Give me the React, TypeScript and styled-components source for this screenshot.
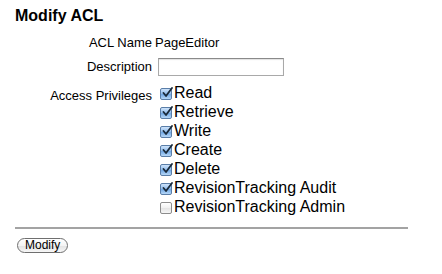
import React from 'react';
import styled, {createGlobalStyle} from 'styled-components';

const GlobalStyle = createGlobalStyle`
    html, body {
        margin: 0;
        padding: 0;
        background: #ffffff;
    }
    body {
        font-family: "Liberation Sans", Arial, sans-serif;
        color: #000000;
    }
`;

const Page = styled.div`
    width: 393px;
    padding: 6px 0 0 15px;
`;

const Title = styled.h2`
    font-size: 16px;
    font-weight: bold;
    line-height: 19px;
    margin: 0 0 10px 0;
`;

const FormGrid = styled.div`
    display: grid;
    grid-template-columns: 137px 1fr;
    column-gap: 3px;
    row-gap: 7px;
    align-items: baseline;
`;

const Label = styled.div`
    font-size: 13px;
    line-height: 16px;
    text-align: right;
`;

const Value = styled.div`
    font-size: 13px;
    line-height: 16px;
`;

const TextInput = styled.input`
    box-sizing: border-box;
    width: 126px;
    height: 18px;
    margin: 0 0 0 3px;
    padding: 1px 3px;
    border: 1px solid #a9a9a9;
    border-top-color: #8a8a8a;
    box-shadow: inset 0 1px 1px rgba(0, 0, 0, 0.12);
    font-family: inherit;
    font-size: 12px;
    vertical-align: baseline;
`;

const PrivilegeList = styled.div`
    display: flex;
    flex-direction: column;
`;

const PrivilegeRow = styled.label`
    display: flex;
    align-items: center;
    font-size: 16px;
    line-height: 19px;
    height: 19px;
`;

const Box = styled.span<{ $checked: boolean }>`
    box-sizing: border-box;
    display: inline-flex;
    align-items: center;
    justify-content: center;
    width: 12px;
    height: 12px;
    margin: 2px 2px 0 5px;
    border-radius: 2px;
    border: 1px solid ${(p) => (p.$checked ? '#5a7ea8' : '#8c8c8c')};
    background: ${(p) =>
        p.$checked
            ? 'linear-gradient(#cfe4fb 0%, #8fbbeb 50%, #6ea6e4 51%, #b6d7f7 100%)'
            : 'linear-gradient(#ffffff 0%, #f0f0f0 50%, #e3e3e3 51%, #f6f6f6 100%)'};
    position: relative;
    svg {
        position: absolute;
        left: 1px;
        top: -2px;
    }
`;

const Divider = styled.hr`
    border: none;
    border-top: 2px solid #a3a3a3;
    margin: 11px 0 0 0;
    height: 0;
`;

const Button = styled.button`
    margin: 9px 0 0 2px;
    height: 15px;
    padding: 0 7px;
    border: 1px solid #6f6f6f;
    border-radius: 8px;
    background: linear-gradient(#ffffff 0%, #f4f4f4 50%, #e2e2e2 51%, #f7f7f7 100%);
    font-family: "Liberation Sans", Arial, sans-serif;
    font-size: 12px;
    line-height: 13px;
    color: #000000;
`;

const Check = () => (
    <svg width="11" height="11" viewBox="0 0 11 11">
        <path d="M1.5 6 L4 9 L10 1" fill="none" stroke="#1a2a3a" strokeWidth="1.8" strokeLinecap="round" strokeLinejoin="round" />
    </svg>
);

const privileges = [
    {name: 'Read', checked: true},
    {name: 'Retrieve', checked: true},
    {name: 'Write', checked: true},
    {name: 'Create', checked: true},
    {name: 'Delete', checked: true},
    {name: 'RevisionTracking Audit', checked: true},
    {name: 'RevisionTracking Admin', checked: false},
];

const App = () => {
    return (
        <Page>
            <GlobalStyle />
            <Title>Modify ACL</Title>
            <FormGrid>
                <Label>ACL Name</Label>
                <Value>PageEditor</Value>
                <Label>Description</Label>
                <Value><TextInput type="text" /></Value>
                <Label>Access Privileges</Label>
                <PrivilegeList>
                    {privileges.map((p) => (
                        <PrivilegeRow key={p.name}>
                            <Box $checked={p.checked}>{p.checked && <Check />}</Box>
                            {p.name}
                        </PrivilegeRow>
                    ))}
                </PrivilegeList>
            </FormGrid>
            <Divider />
            <Button>Modify</Button>
        </Page>
    );
};

export default App;
